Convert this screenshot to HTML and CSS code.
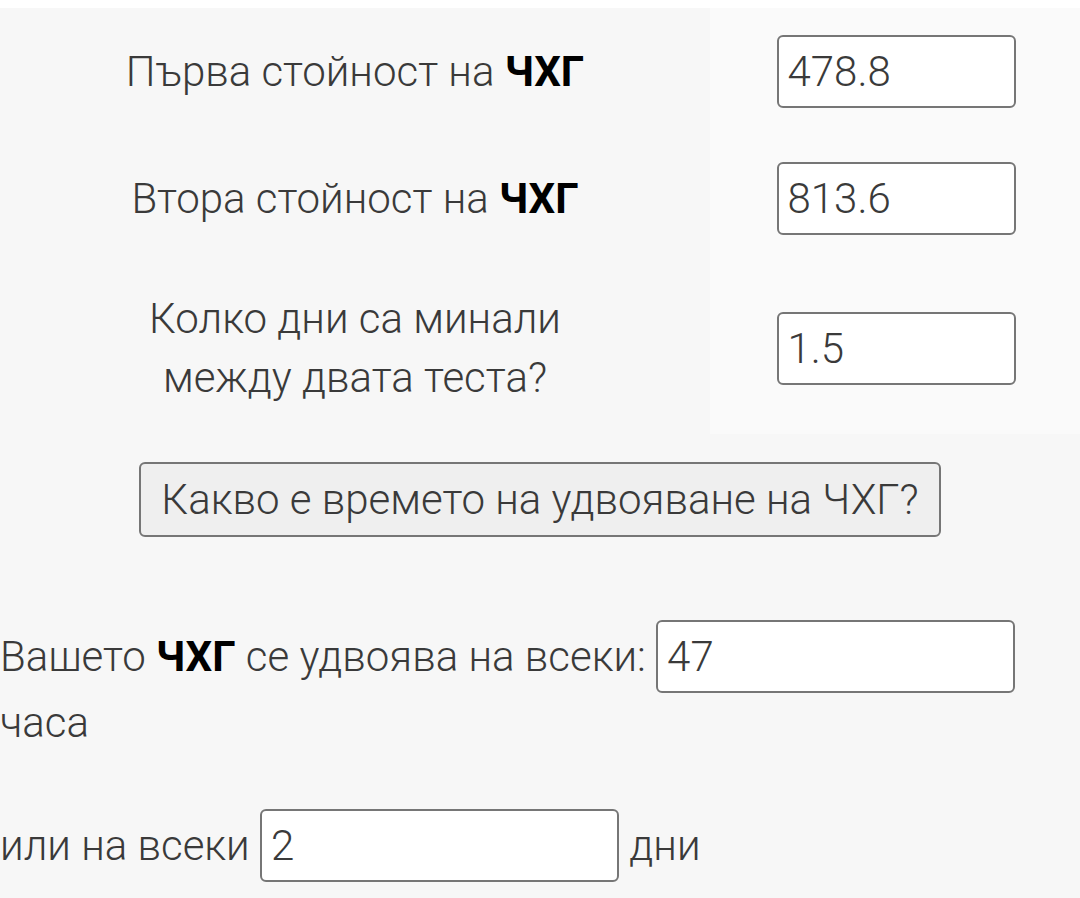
FILE: index.html
```html
<!DOCTYPE html>
<html lang="bg">
  <head>
    <meta charset="UTF-8" />
    <meta name="viewport" content="width=device-width, initial-scale=1.0" />
    <title>Време на удвояване на ЧХГ</title>
    <link rel="stylesheet" href="styles.css">
  </head>
  <body>
    <div class="page">
      <div class="form">
        <div class="label"><span>Първа стойност на <b>ЧХГ</b></span></div>
        <div class="field"><input class="num" type="text" value="478.8"></div>
        <div class="label"><span>Втора стойност на <b>ЧХГ</b></span></div>
        <div class="field"><input class="num" type="text" value="813.6"></div>
        <div class="label"><span>Колко дни са минали<br>между двата теста?</span></div>
        <div class="field"><input class="num" type="text" value="1.5"></div>
      </div>
      <div class="action">
        <button class="btn" type="button">Какво е времето на удвояване на ЧХГ?</button>
      </div>
      <p class="result">Вашето <b>ЧХГ</b> се удвоява на всеки: <input class="out" type="text" value="47"> часа</p>
      <p class="result">или на всеки <input class="out" type="text" value="2"> дни</p>
    </div>
  </body>
</html>
```

FILE: styles.css
```css
html,
body {
  margin: 0;
  padding: 0;
  background: #fff;
}
body {
  font-family: "Roboto Light", Roboto, "Noto Sans", sans-serif;
  font-weight: 300;
  font-size: 42px;
  line-height: 59px;
  color: #3a3a3a;
}
b {
  font-family: Roboto, "Noto Sans", sans-serif;
  font-weight: 700;
  color: #000;
}
.page {
  margin-top: 8px;
  min-height: 890px;
  background-color: #f7f7f7;
}
.form {
  display: grid;
  grid-template-columns: 710px 1fr;
}
.label {
  display: flex;
  align-items: center;
  justify-content: center;
  text-align: center;
  padding: 27px 0;
}
.field {
  display: flex;
  align-items: center;
  justify-content: center;
  padding: 27px 0 27px 2px;
  background-color: #fafafa;
}
.num,
.out {
  box-sizing: border-box;
  height: 73px;
  padding: 0 9px;
  border: 2px solid #767676;
  border-radius: 6px;
  background: #fff;
  font-family: inherit;
  font-weight: 300;
  font-size: 42px;
  color: #3a3a3a;
}
.num {
  width: 239px;
}
.out {
  width: 359px;
}
.action {
  text-align: center;
  padding-top: 28px;
}
.btn {
  box-sizing: border-box;
  height: 75px;
  padding: 0 20px;
  border: 2px solid #767676;
  border-radius: 6px;
  background-color: #efefef;
  font-family: inherit;
  font-weight: 300;
  font-size: 42px;
  color: #3a3a3a;
}
.result {
  margin: 0;
  padding-top: 83px;
}
.result + .result {
  padding-top: 57px;
}
```
